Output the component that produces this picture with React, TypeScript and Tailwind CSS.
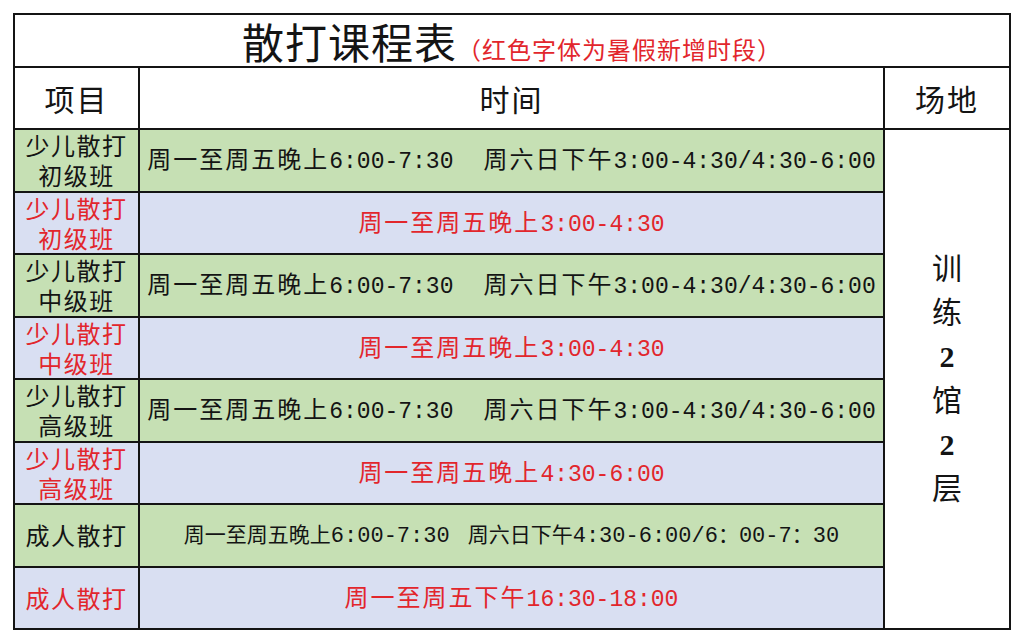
const rows = [
  { name: ["少儿散打", "初级班"], red: false, time: ["周一至周五晚上6:00-7:30", "周六日下午3:00-4:30/4:30-6:00"] },
  { name: ["少儿散打", "初级班"], red: true, time: ["周一至周五晚上3:00-4:30"] },
  { name: ["少儿散打", "中级班"], red: false, time: ["周一至周五晚上6:00-7:30", "周六日下午3:00-4:30/4:30-6:00"] },
  { name: ["少儿散打", "中级班"], red: true, time: ["周一至周五晚上3:00-4:30"] },
  { name: ["少儿散打", "高级班"], red: false, time: ["周一至周五晚上6:00-7:30", "周六日下午3:00-4:30/4:30-6:00"] },
  { name: ["少儿散打", "高级班"], red: true, time: ["周一至周五晚上4:30-6:00"] },
  { name: ["成人散打"], red: false, small: true, time: ["周一至周五晚上6:00-7:30", "周六日下午4:30-6:00/6：00-7：30"] },
  { name: ["成人散打"], red: true, time: ["周一至周五下午16:30-18:00"] },
];

// digits in the original are half-width monospace, CJK is full-width with a bit of spacing
function TimeText({ text, small }: { text: string; small?: boolean }) {
  return (
    <>
      {text.split(/([0-9:/-]+)/).map((part, i) =>
        i % 2 === 1 ? (
          <span
            key={i}
            className={`font-['Liberation_Mono',monospace] tracking-normal ${small ? "text-[22px]" : "text-[23px]"}`}
          >
            {part}
          </span>
        ) : (
          <span key={i} className={small ? "tracking-normal" : "tracking-[2px]"}>
            {part}
          </span>
        )
      )}
    </>
  );
}

export default function App() {
  return (
    <div className="min-h-[642px] w-[1024px] bg-white pt-[13px] pl-[13px] font-['Noto_Sans_CJK_SC',sans-serif] text-[#141414]">
      <table className="w-[998px] table-fixed border-collapse border-2 border-[#141414]">
        <colgroup>
          <col className="w-[125px]" />
          <col />
          <col className="w-[126px]" />
        </colgroup>
        <tbody>
          <tr className="h-[53px]">
            <td colSpan={3} className="border-2 border-[#141414] text-center leading-none">
              <span className="text-[42px] tracking-[1px]">散打课程表</span>
              <span className="text-[24px] tracking-[1px] text-[#e2262c]">（红色字体为暑假新增时段）</span>
            </td>
          </tr>
          <tr className="h-[62px] text-[30px] tracking-[2px]">
            <td className="border-2 border-[#141414] text-center">项目</td>
            <td className="border-2 border-[#141414] text-center">时间</td>
            <td className="border-2 border-[#141414] text-center">场地</td>
          </tr>
          {rows.map((row, i) => (
            <tr
              key={i}
              className={`h-[62.5px] ${row.red ? "bg-[#d9dff2] text-[#e2262c]" : "bg-[#c6e0b4]"}`}
            >
              <td className="border-2 border-[#141414] text-center text-[24px] leading-[30px] tracking-[1.5px]">
                {row.name[0]}
                {row.name[1] && (
                  <>
                    <br />
                    {row.name[1]}
                  </>
                )}
              </td>
              <td
                className={`border-2 border-[#141414] text-center leading-none whitespace-nowrap ${
                  row.small ? "text-[21px]" : "text-[24px]"
                }`}
              >
                <TimeText text={row.time[0]} small={row.small} />
                {row.time[1] && (
                  <span className={row.small ? "ml-[18px]" : "ml-[30px]"}>
                    <TimeText text={row.time[1]} small={row.small} />
                  </span>
                )}
              </td>
              {i === 0 && (
                <td
                  rowSpan={8}
                  className="border-2 border-[#141414] bg-white text-center font-['Liberation_Serif','Noto_Sans_CJK_SC',serif] text-[30px] leading-[44px] text-[#141414]"
                >
                  训<br />练<br />
                  <span className="font-bold">2</span>
                  <br />馆<br />
                  <span className="font-bold">2</span>
                  <br />层
                </td>
              )}
            </tr>
          ))}
        </tbody>
      </table>
    </div>
  );
}
